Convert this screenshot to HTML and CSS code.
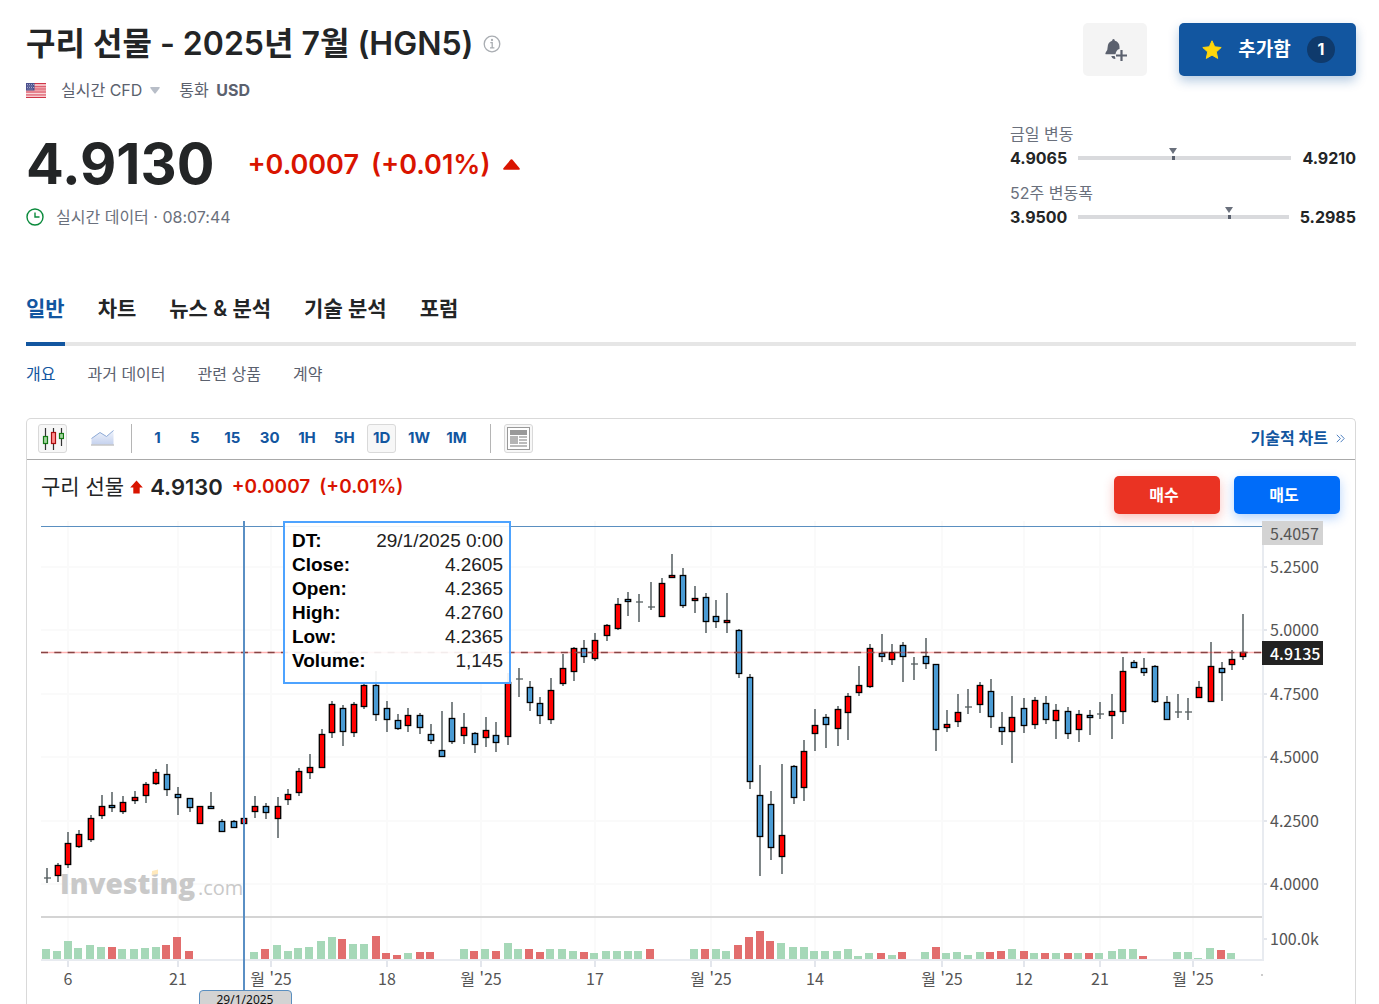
FILE: index.html
```html
<!DOCTYPE html>
<html lang="ko">
<head>
<meta charset="utf-8">
<meta name="viewport" content="width=device-width, initial-scale=1">
<title>구리 선물 - 2025년 7월 (HGN5)</title>
<link rel="stylesheet" href="styles.css">
</head>
<body>
<main class="page">
  <header class="instrument">
    <div class="summary">
      <div class="title-row">
        <h1 class="title">구리 선물 - 2025년 7월 (HGN5)</h1>
        <svg class="info" width="18" height="18" viewBox="0 0 18 18" fill="none" stroke="#a9adb2" stroke-width="1.3"><circle cx="9" cy="9" r="7.8"/><path d="M7.300 7.600H9.200V12.600M7 12.800h4.400"/><circle cx="9" cy="5" r=".5" fill="#a9adb2"/></svg>
      </div>
      <div class="meta">
        <svg class="flag" width="20" height="15" viewBox="0 0 20 15"><rect width="20" height="15" fill="#eea2a9"/><path d="M0 .5h20M0 14.500h20" stroke="#cf3548"/><path d="M8 3.500h12M8 6h12M0 9h20M0 12h20" stroke="#de6373"/><path d="M8 2h12M0 13.300h20M0 10.500h20" stroke="#fbe4e6" stroke-width=".8"/><rect width="8.500" height="7.500" fill="#4a4f8c"/><path d="M1 1.500h7M1.500 3h6M1 4.500h7M1.500 6h6" stroke="#b9bcd8" stroke-width=".8" stroke-dasharray="1 1"/></svg>
        <button class="market" type="button">실시간 CFD
          <svg width="10" height="7" viewBox="0 0 10 7"><path d="M.8 0h8.400q.8 0 .5.900L5.700 6.300q-.7.700-1.400 0L.3.900Q0 0 .8 0z" fill="#b8bec8"/></svg>
        </button>
        <span class="currency">통화 <strong>USD</strong></span>
      </div>
      <div class="price-row">
        <span class="price">4.9130</span>
        <span class="change">+0.0007</span>
        <span class="change">(+0.01%)</span>
        <svg class="up" width="17" height="11" viewBox="0 0 17 11"><path d="M7.700.6q.8-.8 1.600 0l7.300 8.700q.7 1.400-.6 1.400H1q-1.300 0-.6-1.400z" fill="#d91400"/></svg>
      </div>
      <div class="time">
        <svg width="18" height="18" viewBox="0 0 18 18" fill="none" stroke="#0a8a3c" stroke-width="1.4"><circle cx="9" cy="9" r="8"/><path d="M9 4.500V9h4.500"/></svg>
        <span>실시간 데이터 · <time>08:07:44</time></span>
      </div>
    </div>
    <div class="side">
      <div class="actions">
        <button class="alert" type="button" aria-label="알림 추가">
          <svg width="23" height="23" viewBox="0 0 23 23"><path d="M9.500 1q1.300 0 1.400 1.700 4.400 1.300 4.600 6v2.300q-3.400.7-4 5.300H1.600q-.7-1 .4-2.400 1.700-1.600 1.700-5.200.1-4.600 4.400-6Q8.200 1 9.500 1z" fill="#5b616e"/><path d="M7.200 18h3.400l1 2.600q-3.200 1.200-4.400-2.600z" fill="#5b616e"/><path d="M17.500 12v11M12 17.500h11" stroke="#5b616e" stroke-width="2.200"/></svg>
        </button>
        <button class="watch" type="button">
          <svg width="20" height="20" viewBox="0 0 20 20"><path d="M10 .8l2.700 6 6.500.7-4.900 4.400 1.400 6.500L10 15.100l-5.700 3.300 1.400-6.500L.8 7.500l6.500-.7z" fill="#ffd60a" stroke="#ffd60a" stroke-linejoin="round"/></svg>
          <span>추가함</span>
          <span class="count">1</span>
        </button>
      </div>
      <dl class="ranges">
        <dt>금일 변동</dt>
        <dd><b>4.9065</b><span class="track"><i class="marker" style="left:44%"></i></span><b>4.9210</b></dd>
        <dt>52주 변동폭</dt>
        <dd><b>3.9500</b><span class="track"><i class="marker" style="left:71%"></i></span><b>5.2985</b></dd>
      </dl>
    </div>
  </header>

  <nav class="tabs" aria-label="주요 메뉴">
    <a class="active" href="#">일반</a><a href="#">차트</a><a href="#">뉴스 &amp; 분석</a><a href="#">기술 분석</a><a href="#">포럼</a>
  </nav>
  <nav class="subtabs" aria-label="하위 메뉴">
    <a class="active" href="#">개요</a><a href="#">과거 데이터</a><a href="#">관련 상품</a><a href="#">계약</a>
  </nav>

  <section class="card">
    <div class="toolbar">
      <button class="tool on" type="button" aria-label="캔들 차트">
        <svg width="23" height="25" viewBox="0 0 23 25"><path d="M4.500 2v22M12.500 2v22M20.500 2v18" stroke="#333" stroke-width="1.200"/><rect x="2.500" y="10.500" width="4" height="7" fill="#a5d6a0" stroke="#137a13" stroke-width="1.200"/><rect x="10.500" y="6.500" width="4" height="11" fill="#ff8f8f" stroke="#a80f0f" stroke-width="1.200"/><rect x="18.500" y="7.500" width="4" height="5" fill="#a5d6a0" stroke="#137a13" stroke-width="1.200"/></svg>
      </button>
      <button class="tool area" type="button" aria-label="영역 차트">
        <svg width="23" height="16" viewBox="0 0 23 16"><defs><linearGradient id="fade" x2="0" y2="1"><stop stop-color="#f0f4fc"/><stop offset="1" stop-color="#c5d2ee"/></linearGradient></defs><path d="M.5 8.500L9 2.500l6.500 4 7-6V14.500H.5z" fill="url(#fade)"/><path d="M.5 8.500L9 2.500l6.500 4 7-6" fill="none" stroke="#8ca9d6"/><path d="M0 15h23" stroke="#aaa"/></svg>
      </button>
      <span class="rule"></span>
      <div class="frames">
        <button class="tool" type="button">1</button><button class="tool" type="button">5</button><button class="tool" type="button">15</button><button class="tool" type="button">30</button><button class="tool" type="button">1H</button><button class="tool" type="button">5H</button><button class="tool on" type="button">1D</button><button class="tool" type="button">1W</button><button class="tool" type="button">1M</button>
      </div>
      <span class="rule rule-end"></span>
      <button class="tool on" type="button" aria-label="뉴스 표시">
        <svg width="23" height="23" viewBox="0 0 23 23"><rect x=".5" y=".5" width="22" height="22" fill="#fff" stroke="#999"/><path d="M3 5.500h17" stroke="#999" stroke-width="5"/><path d="M3 13h8" stroke="#b5b5b5" stroke-width="8"/><path d="M12 10h8M12 13h8M12 16h8M3 19h17" stroke="#bcbcbc" stroke-width="2"/></svg>
      </button>
      <a class="technical" href="#">기술적 차트
        <svg width="9" height="9" viewBox="0 0 9 9" fill="none" stroke="#4d7fc0"><path d="M.8.8l3.600 3.700L.8 8.200M4.600.8l3.600 3.700-3.600 3.700"/></svg>
      </a>
    </div>

    <div class="quote">
      <div class="quote-text">
        <span class="quote-name">구리 선물</span>
        <svg width="13" height="14" viewBox="0 0 13 14"><path d="M6.500.5L12.800 7.500H9.700V13.500H3.300V7.500H.2z" fill="#d91400"/></svg>
        <strong>4.9130</strong>
        <span class="quote-change">+0.0007</span>
        <span class="quote-change">(+0.01%)</span>
      </div>
      <button class="trade buy" type="button">매수</button>
      <button class="trade sell" type="button">매도</button>
    </div>

    <div class="chart">
      <svg id="plot" class="plot" viewBox="27 514 1328 490" role="img" aria-label="구리 선물 일봉 차트">
        <g id="grid"></g>
        <g class="logo">
          <text class="logo-name" x="60" y="894">Investing</text>
          <path d="M152 871l6-1.500V874l-6 1z" fill="#ffe9bd"/>
          <text class="logo-com" x="198" y="895">.com</text>
        </g>
        <path d="M41 917h1221" stroke="#d4d4d4" stroke-width="2"/>
        <path d="M41 960h1222" stroke="#e8ebf0" stroke-width="2"/>
        <path d="M1263 521v440" stroke="#e8ebf0" stroke-width="2"/>
        <g id="volume"></g>
        <g id="candles"></g>
        <path d="M41 652.500h1221" stroke="#f00" stroke-opacity=".3" stroke-width="1.500"/>
        <path d="M41 652.500h1221" stroke="#844" stroke-dasharray="7 6.330" stroke-width="1.500"/>
        <path d="M41 526.500h1222" stroke="#5a8fc0"/>
        <path d="M244 521v469" stroke="#5a8fc4" stroke-width="2"/>
        <rect x="1262" y="521" width="61" height="24" fill="#d3d3d3"/>
        <text class="axis" x="1270" y="540">5.4057</text>
        <rect x="1262" y="641" width="61" height="24" fill="#222"/>
        <text class="axis last" x="1270" y="660">4.9135</text>
        <g id="labels"></g>
        <path d="M1262 974v2" stroke="#999"/>
        <path d="M199.500 1006v-12q0-3.500 3.500-3.500h85q3.500 0 3.500 3.500v12z" fill="#d3d3d3" stroke="#5a8fc0"/>
        <text class="date" x="245" y="1004">29/1/2025</text>
      </svg>
      <table class="tip">
        <tr><th>DT:</th><td>29/1/2025 0:00</td></tr>
        <tr><th>Close:</th><td>4.2605</td></tr>
        <tr><th>Open:</th><td>4.2365</td></tr>
        <tr><th>High:</th><td>4.2760</td></tr>
        <tr><th>Low:</th><td>4.2365</td></tr>
        <tr><th>Volume:</th><td>1,145</td></tr>
      </table>
    </div>
  </section>
</main>
<script src="chart.js"></script>
</body>
</html>
```
FILE: styles.css
```css
* { box-sizing: border-box; }

body {
  margin: 0;
  background: #fff;
  color: #232526;
  font: 16px/20px Inter, "Noto Sans CJK KR", sans-serif;
}

button {
  margin: 0;
  padding: 0;
  border: 0;
  background: none;
  color: inherit;
  font: inherit;
}

a { color: inherit; text-decoration: none; }

.page { padding: 23px 23px 0 26px; }

.instrument { display: flex; justify-content: space-between; }

.title-row { display: flex; align-items: center; gap: 9px; height: 42px; }
.title { margin: 0; font-size: 32px; line-height: 42px; font-weight: 600; }

.meta { display: flex; align-items: center; margin-top: 15px; height: 20px; color: #5b616e; }
.market { display: flex; align-items: center; gap: 8px; margin: 0 19px 0 15px; }
.currency strong { margin-left: 3px; font-weight: 700; }

.price-row { display: flex; align-items: center; margin-top: 30px; height: 68px; }
.price { margin-right: 33px; font-size: 56px; line-height: 68px; font-weight: 700; }
.change { margin-right: 12px; padding-top: 2px; color: #d91400; font-size: 27px; line-height: 36px; font-weight: 600; }

.time { display: flex; align-items: center; gap: 12px; margin-top: 9px; color: #6a707c; }

.side { width: 346px; }
.actions { display: flex; justify-content: flex-end; gap: 32px; }
.alert { width: 64px; height: 53px; border-radius: 5px; background: #f4f4f4; padding-top: 4px; }
.watch {
  display: flex;
  align-items: center;
  justify-content: space-between;
  width: 177px;
  height: 53px;
  padding: 0 21px 0 23px;
  border-radius: 5px;
  background: #1256a0;
  box-shadow: 0 5px 11px rgba(18, 86, 160, .3);
  color: #fff;
  font-size: 19px;
  font-weight: 700;
}
.count {
  width: 28px;
  border-radius: 14px;
  background: #0f3a6c;
  font-size: 16px;
  line-height: 27px;
}

.ranges { margin: 48px 0 0; }
.ranges dt { color: #6a707c; }
.ranges dd { display: flex; align-items: center; gap: 11px; margin: 4px 0 15px; }
.ranges b { font-weight: 700; }
.track { position: relative; flex: 1; height: 4px; background: #d9dadd; }
.marker { position: absolute; top: 0; width: 3px; height: 4px; background: #5b616e; }
.marker::before {
  content: "";
  position: absolute;
  bottom: 6px;
  left: -3px;
  border: 4px solid transparent;
  border-top: 6px solid #6a707c;
  border-bottom: 0;
}

.tabs {
  display: flex;
  gap: 33px;
  margin-top: 53px;
  border-bottom: 4px solid #e6e6e6;
  font-size: 21px;
  line-height: 28px;
  font-weight: 600;
}
.tabs a { margin-bottom: -4px; padding-bottom: 19px; border-bottom: 4px solid transparent; }
.tabs .active { border-color: #1256a0; color: #1256a0; }

.subtabs { display: flex; gap: 32px; margin-top: 18px; color: #5b616e; }
.subtabs .active { color: #1256a0; }

.card {
  margin-top: 34px;
  border: 1px solid #d9d9d9;
  border-bottom: 0;
  border-radius: 5px 5px 0 0;
}

.toolbar {
  display: flex;
  align-items: center;
  height: 41px;
  padding: 0 10px 2px 11px;
  border-bottom: 1px solid #a9a9a9;
  color: #1256a0;
  font-weight: 700;
}
.tool {
  display: flex;
  align-items: center;
  justify-content: center;
  width: 29px;
  height: 29px;
  border: 1px solid transparent;
  border-radius: 3px;
  font-size: 15px;
}
.on { border-color: #d9d9d9; background: #f7f7f7; }
.area { margin: 0 14px 0 21px; }
.rule { width: 1px; height: 29px; background: #b5b5b5; }
.frames { display: flex; justify-content: space-between; width: 328px; margin: 0 19px 0 11px; }
.rule-end { margin-right: 13px; }
.technical { display: flex; align-items: center; gap: 8px; margin-left: auto; }

.quote { display: flex; align-items: flex-start; justify-content: flex-end; padding: 16px 15px 0 14px; }
.quote-text { display: flex; align-items: center; margin-right: auto; height: 22px; }
.quote-name { margin-right: 6px; font-size: 21px; }
.quote strong { margin: 0 9px 0 7px; font-size: 22px; font-weight: 600; }
.quote-change { margin-right: 9px; color: #d91400; font-size: 19px; font-weight: 600; }
.trade {
  width: 106px;
  height: 38px;
  margin-left: 14px;
  padding-right: 6px;
  border-radius: 5px;
  color: #fff;
  font-weight: 700;
}
.buy { background: #ea3323; box-shadow: 0 4px 11px rgba(234, 51, 35, .3); }
.sell { background: #006cf9; box-shadow: 0 4px 11px rgba(0, 108, 249, .3); }

.chart { position: relative; }
.plot { display: block; width: 100%; height: auto; }
.axis { fill: #555; font: 16px "Noto Sans CJK KR", sans-serif; }
.last { fill: #fff; font-weight: 500; }
.middle { text-anchor: middle; }
.date { fill: #111; font: 12px "Noto Sans", sans-serif; text-anchor: middle; }
.logo { fill: #c9c9c9; }
.logo-name { font: 800 28px "Open Sans", sans-serif; }
.logo-com { font: 400 20px "Open Sans", sans-serif; }

.tip {
  position: absolute;
  top: 7px;
  left: 256px;
  width: 228px;
  padding: 6px 5px 9px;
  border: 2px solid #4da3ff;
  border-spacing: 0;
  background: rgba(255, 255, 255, .9);
  color: #000;
  font: 19px/24px "Liberation Sans", Arial, sans-serif;
}
.tip th { padding: 0 2px; text-align: left; }
.tip td { padding: 0 1px; color: #222; text-align: right; white-space: nowrap; }
```
FILE: chart.js
```js
// One candle per row: centre x, high, low, body top, body bottom, kind.
// Kinds: r = red body, b = blue body, d = open equals close.
const candles = `
47 868 883 878 878 d|58 863 882 865 876 r|68 832 868 843 865 r|79 830 848 834 847 r|91 815 842 818 840 r
102 795 819 806 816 r|112 792 812 805 808 b|123 796 814 802 812 r|135 791 804 797 801 r|146 782 803 784 796 r
156 769 785 772 784 r|167 764 796 774 790 b|178 787 815 794 798 b|190 798 812 798 808 b|200 806 824 806 824 r
211 792 809 806 809 b|222 819 832 821 832 b|234 820 828 821 828 b|244 817 825 818 824 r|255 796 818 806 812 r
266 803 819 806 813 b|278 797 838 806 819 r|288 789 805 794 800 r|299 768 796 771 793 r|310 754 779 767 773 r
322 729 768 734 768 r|332 701 738 704 733 r|343 705 746 708 732 b|354 702 737 704 733 r|364 683 709 685 707 r
376 671 721 685 715 b|387 701 732 708 720 b|398 714 730 720 729 b|408 708 732 715 726 r|420 713 734 715 728 b
431 724 744 734 741 b|442 711 757 750 757 b|452 702 744 718 742 b|464 713 744 727 736 r|475 732 753 733 745 b
486 717 747 730 738 r|496 722 752 735 743 b|508 673 745 682 737 r|519 668 697 679 679 d|530 681 711 687 703 b
540 697 724 703 716 b|551 678 724 690 720 r|563 654 686 668 684 r|574 647 681 648 672 r|584 640 663 648 657 b
595 633 661 640 659 r|607 624 641 625 636 r|618 598 630 604 629 r|628 592 616 599 602 b|639 594 622 602 602 d
651 582 610 607 607 d|662 578 617 583 617 r|672 554 578 575 578 r|683 568 608 575 606 b|695 586 613 598 601 r
706 593 633 597 622 b|716 600 628 616 622 b|727 593 633 620 623 r|739 629 678 630 674 b|750 674 789 677 782 b
760 765 876 795 837 b|771 791 860 804 848 b|782 764 874 835 857 r|794 765 804 766 798 b|804 740 801 751 788 r
815 709 751 725 734 r|826 714 748 717 725 b|838 706 746 709 729 r|848 693 740 696 713 r|859 666 696 685 693 r
870 644 688 648 687 r|882 634 662 653 657 b|892 644 665 652 660 r|903 642 682 645 657 b|914 657 680 664 664 d
926 638 669 656 664 b|936 664 751 664 730 b|947 710 732 724 728 r|958 694 727 712 722 r|968 689 714 707 707 d
980 682 713 685 705 r|991 679 728 691 717 b|1002 712 745 727 732 b|1012 696 763 717 732 r|1024 698 733 708 726 b
1035 697 729 700 725 r|1046 696 724 703 720 b|1056 704 739 710 721 r|1068 707 739 711 734 b|1079 710 742 714 730 r
1090 710 735 715 718 b|1100 702 719 714 714 d|1112 694 739 711 716 r|1123 657 724 671 712 r|1134 660 668 662 668 b
1144 658 676 668 673 b|1155 665 703 666 702 b|1167 696 720 702 720 b|1178 694 718 712 712 d|1188 698 720 712 712 d
1199 681 698 687 698 r|1211 642 702 666 702 r|1222 662 701 668 673 b|1232 650 670 659 665 r|1243 614 660 652 657 r`;

// Volume bars: centre x, top y, direction (g = up, r = down).
const volumes = `
46 949 g|57 951 g|68 941 g|78 948 g|90 945 g|101 947 g|112 947 r|122 949 g|134 949 g|145 948 g|156 947 g|166 945 r|177 937 r|189 951 r
254 952 g|265 949 r|277 945 g|288 951 g|298 948 g|309 947 g|321 941 g|332 937 g|342 939 r|353 944 g|364 944 g|376 936 r|386 953 r|397 955 r|408 953 g|420 952 r|430 952 r
464 949 g|474 951 r|485 949 g|496 951 r|508 943 g|518 949 g|529 949 r|540 952 r|550 949 g|562 949 g|573 951 g|584 952 r|594 953 g|606 951 g|617 951 g|628 951 g|638 951 g|650 949 r
694 949 g|705 949 r|716 949 g|726 951 g|738 945 r|749 937 r|760 931 r|770 941 r|781 943 g|793 947 g|804 947 g|814 951 g|825 951 g|837 951 g|848 949 g|858 956 g|869 953 g|881 953 r|892 955 g|902 952 r
925 952 g|936 947 r|946 953 g|957 952 g|968 955 g|980 952 g|990 952 r|1001 951 r|1012 949 g|1024 951 r|1034 953 g|1045 953 r|1056 953 g|1068 953 r|1078 953 g|1089 953 r|1099 953 g|1112 951 g|1122 949 g|1133 949 g|1143 956 r
1177 952 g|1188 952 g|1198 958 g|1210 948 g|1221 950 r|1231 953 g`;

const dates = [[68, "6"], [178, "21"], [271, "월 '25"], [387, "18"], [481, "월 '25"], [595, "17"],
  [711, "월 '25"], [815, "14"], [942, "월 '25"], [1024, "12"], [1100, "21"], [1193, "월 '25"]];
const prices = [[567, "5.2500"], [630, "5.0000"], [694, "4.7500"], [757, "4.5000"], [821, "4.2500"], [884, "4.0000"]];

const rows = (text) => text.trim().split(/[|\n]/).map((row) => row.split(" "));
const fill = (id, parts) => { document.getElementById(id).innerHTML = parts.join(""); };

fill("grid", [
  ...dates.map(([x]) => `<path d="M${x} 521V960" stroke="#fafafa" stroke-width="2"/><path d="M${x} 961v6" stroke="#e3e6ec" stroke-width="2"/>`),
  ...prices.map(([y]) => `<path d="M41 ${y}H1262" stroke="#fafafa" stroke-width="2"/><path d="M1263 ${y}h4" stroke="#e3e6ec" stroke-width="2"/>`),
  `<path d="M1263 939h4" stroke="#e3e6ec" stroke-width="2"/>`,
]);

fill("volume", rows(volumes).map(([x, top, kind]) =>
  `<rect x="${x - 4}" y="${top}" width="8" height="${959 - top}" fill="${kind === "g" ? "#a6d8b8" : "#e26d6d"}"/>`));

fill("candles", rows(candles).map(([x, high, low, top, bottom, kind]) => {
  const wick = `<path d="M${x} ${high}V${low}" stroke="#3a4448" stroke-width="1.300"/>`;
  if (kind === "d") return `${wick}<path d="M${x - 3} ${top}h7" stroke="#555f60" stroke-width="1.300"/>`;
  return `${wick}<rect x="${x - 2.700}" y="${+top + 0.5}" width="5.400" height="${Math.max(bottom - top - 1, 2)}" fill="${kind === "r" ? "#f00" : "#4a9bd4"}" stroke="#000" stroke-width="1.300"/>`;
}));

fill("labels", [
  ...dates.map(([x, label]) => `<text class="axis middle" x="${x}" y="985">${label}</text>`),
  ...prices.map(([y, label]) => `<text class="axis" x="1270" y="${y + 6}">${label}</text>`),
  `<text class="axis" x="1270" y="945">100.0k</text>`,
]);
```
